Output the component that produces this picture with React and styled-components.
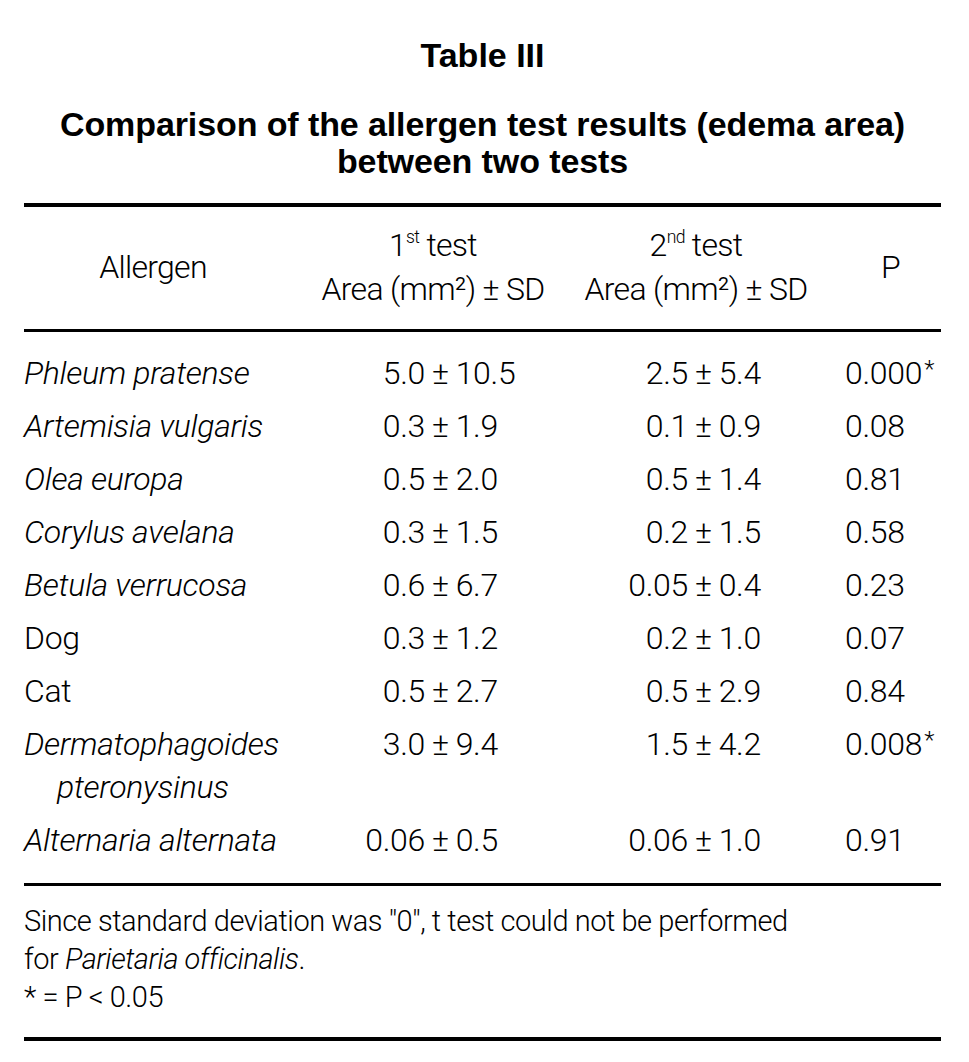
import styled, { createGlobalStyle } from "styled-components";

const light = `Roboto, "Liberation Sans", Arial, sans-serif`;
const cols = "258px 302px 224px 133px";

const rows = [
  { name: "Phleum pratense", italic: true, first: ["5.0", "10.5"], second: ["2.5", "5.4"], p: "0.000", star: true },
  { name: "Artemisia vulgaris", italic: true, first: ["0.3", "1.9"], second: ["0.1", "0.9"], p: "0.08" },
  { name: "Olea europa", italic: true, first: ["0.5", "2.0"], second: ["0.5", "1.4"], p: "0.81" },
  { name: "Corylus avelana", italic: true, first: ["0.3", "1.5"], second: ["0.2", "1.5"], p: "0.58" },
  { name: "Betula verrucosa", italic: true, first: ["0.6", "6.7"], second: ["0.05", "0.4"], p: "0.23" },
  { name: "Dog", first: ["0.3", "1.2"], second: ["0.2", "1.0"], p: "0.07" },
  { name: "Cat", first: ["0.5", "2.7"], second: ["0.5", "2.9"], p: "0.84" },
  { name: "Dermatophagoides", rest: "pteronysinus", italic: true, first: ["3.0", "9.4"], second: ["1.5", "4.2"], p: "0.008", star: true },
  { name: "Alternaria alternata", italic: true, first: ["0.06", "0.5"], second: ["0.06", "1.0"], p: "0.91" },
];

const Value = ({ pair, lead }) => (
  <Pair $lead={lead}>
    <Lhs>{pair[0]}</Lhs>
    <Pm>±</Pm>
    <span>{pair[1]}</span>
  </Pair>
);

const App = () => {
  return (
    <>
      <GlobalStyle />
      <Page>
        <Title>Table III</Title>
        <Heading>
          Comparison of the allergen test results (edema area)
          <br />
          between two tests
        </Heading>
        <Table>
          <HeadRow>
            <HeadCell>Allergen</HeadCell>
            <HeadCell>
              1<sup>st</sup> test
              <br />
              Area (mm²) ± SD
            </HeadCell>
            <HeadCell>
              2<sup>nd</sup> test
              <br />
              Area (mm²) ± SD
            </HeadCell>
            <HeadCell $shift={32}>P</HeadCell>
          </HeadRow>
          <Body>
            {rows.map((r) => (
              <Row key={r.name}>
                <Name $italic={r.italic}>
                  {r.name}
                  {r.rest && (
                    <>
                      <br />
                      <Indent>{r.rest}</Indent>
                    </>
                  )}
                </Name>
                <Value pair={r.first} lead={143} />
                <Value pair={r.second} lead={104} />
                <PCell>
                  {r.p}
                  {r.star && <Star>*</Star>}
                </PCell>
              </Row>
            ))}
          </Body>
        </Table>
        <Notes>
          Since standard deviation was ″0″, t test could not be performed
          <br />
          for <i>Parietaria officinalis</i>.
          <br />* = P &lt; 0.05
        </Notes>
      </Page>
    </>
  );
};

export default App;

const GlobalStyle = createGlobalStyle`
  body {
    margin: 0;
    background: #fff;
    color: #000;
  }
`;

const Page = styled.div`
  width: 917px;
  margin: 0 24px;
  padding-top: 35px;
  font-family: ${light};
  font-weight: 300;
`;

const Title = styled.h1`
  margin: 0;
  text-align: center;
  font-family: "Liberation Sans", Arial, sans-serif;
  font-size: 34px;
  font-weight: 700;
  line-height: 40px;
`;

const Heading = styled.h2`
  margin: 31px 0 0;
  text-align: center;
  font-family: "Liberation Sans", Arial, sans-serif;
  font-size: 34px;
  font-weight: 700;
  line-height: 37px;
  letter-spacing: -0.1px;
`;

const Table = styled.div`
  margin-top: 23px;
  border-top: 4px solid #000;
  border-bottom: 3px solid #000;
`;

const HeadRow = styled.div`
  display: grid;
  grid-template-columns: ${cols};
  align-items: center;
  padding: 16px 0 18px;
  border-bottom: 3px solid #000;
`;

const HeadCell = styled.div`
  text-align: center;
  font-size: 32px;
  letter-spacing: -0.7px;
  line-height: 44px;
  white-space: nowrap;
  padding-left: ${(p) => p.$shift || 0}px;

  sup {
    font-size: 0.55em;
    line-height: 0;
    vertical-align: 0.75em;
  }
`;

const Body = styled.div`
  padding: 15px 0 16px;
`;

const Row = styled.div`
  display: grid;
  grid-template-columns: ${cols};
  align-items: start;
  padding: 5px 0;
  font-size: 32px;
  letter-spacing: -0.3px;
  line-height: 43px;
  white-space: nowrap;
`;

const Name = styled.div`
  font-style: ${(p) => (p.$italic ? "italic" : "normal")};
`;

const Indent = styled.span`
  display: inline-block;
  padding-left: 33px;
`;

const Pair = styled.div`
  display: grid;
  grid-template-columns: ${(p) => p.$lead}px auto auto;
  justify-content: start;
`;

const Lhs = styled.span`
  text-align: right;
`;

const Pm = styled.span`
  margin: 0 7px;
`;

const PCell = styled.div`
  padding-left: 37px;
`;

const Star = styled.span`
  font-size: 0.75em;
  line-height: 0;
  vertical-align: 0.3em;
  margin-left: 2px;
`;

const Notes = styled.div`
  padding: 16px 0 21px;
  border-bottom: 4px solid #000;
  font-size: 29px;
  letter-spacing: -0.45px;
  line-height: 38px;
`;
